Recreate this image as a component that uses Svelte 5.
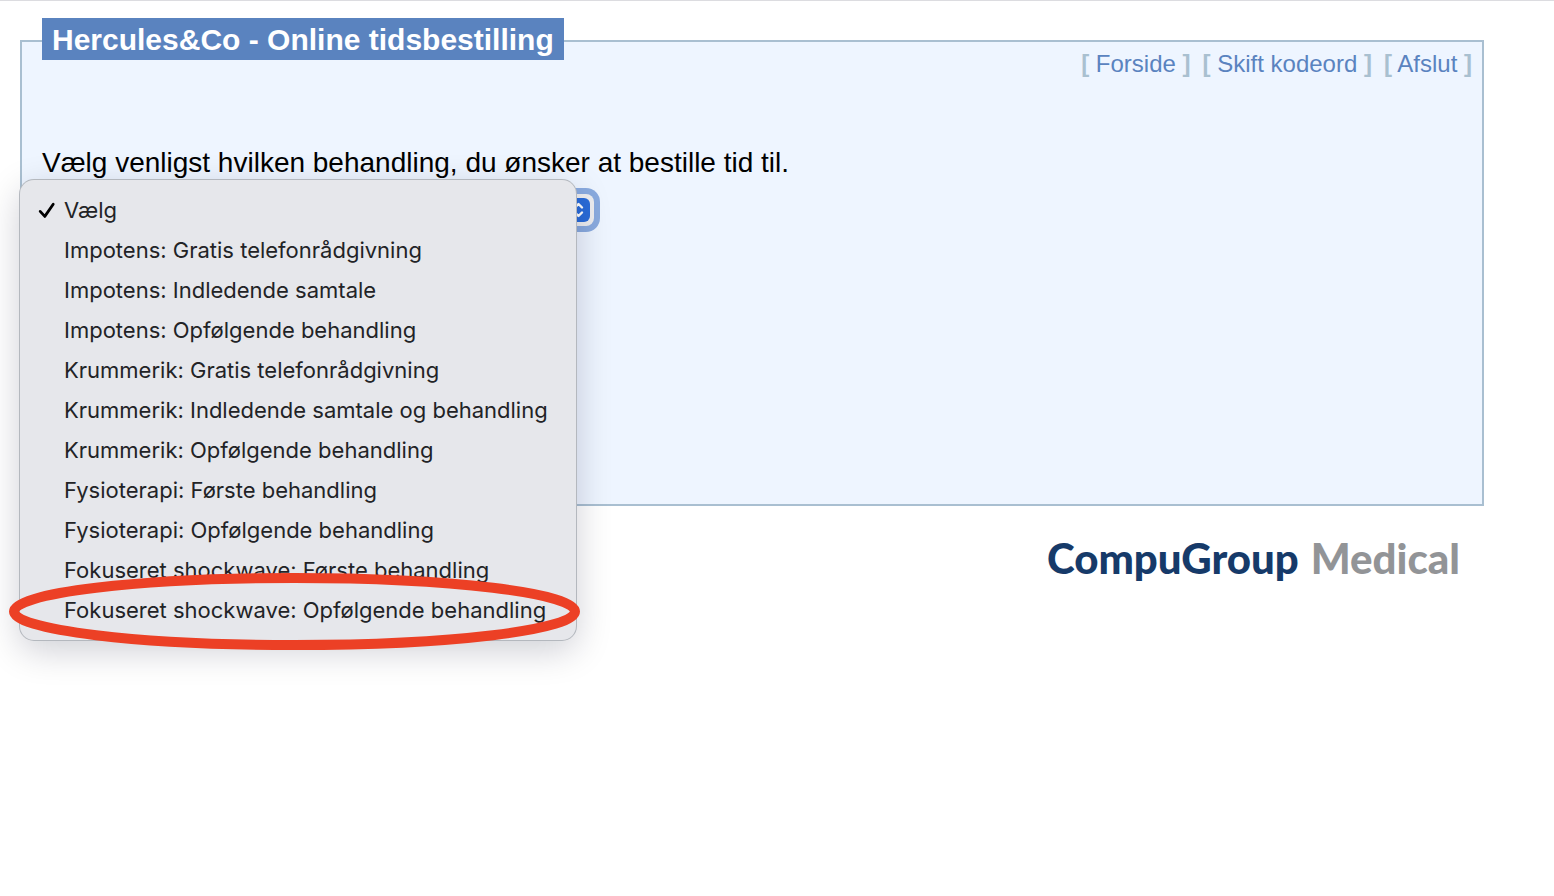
<script lang="ts">
  const links = ['Forside', 'Skift kodeord', 'Afslut'];

  const treatments = [
    'Vælg',
    'Impotens: Gratis telefonrådgivning',
    'Impotens: Indledende samtale',
    'Impotens: Opfølgende behandling',
    'Krummerik: Gratis telefonrådgivning',
    'Krummerik: Indledende samtale og behandling',
    'Krummerik: Opfølgende behandling',
    'Fysioterapi: Første behandling',
    'Fysioterapi: Opfølgende behandling',
    'Fokuseret shockwave: Første behandling',
    'Fokuseret shockwave: Opfølgende behandling',
  ];

  let selected = $state('Vælg');
</script>

<div class="page">
  <main class="panel">
    <header>
      <h1>Hercules&amp;Co - Online tidsbestilling</h1>
      <nav>
        {#each links as link}
          <span class="nav-item"><b>[</b> <a href="#top">{link}</a> <b>]</b></span>
        {/each}
      </nav>
    </header>

    <form>
      <label for="treatment">Vælg venligst hvilken behandling, du ønsker at bestille tid til.</label>
      <div class="picker">
        <select id="treatment" bind:value={selected}>
          {#each treatments as treatment}
            <option>{treatment}</option>
          {/each}
        </select>
        <span class="stepper">
          <svg width="24" height="24" viewBox="0 0 24 24" fill="none" aria-hidden="true">
            <path
              d="M9 9.5L12.5 6L16 9.5M9 14.5L12.5 18L16 14.5"
              stroke="#fff"
              stroke-width="2.4"
              stroke-linecap="round"
              stroke-linejoin="round"
            />
          </svg>
        </span>

        <!-- Open menu, laid over the select -->
        <div class="menu" role="listbox" aria-label="Behandling">
          {#each treatments as treatment}
            <button
              type="button"
              role="option"
              aria-selected={treatment === selected}
              onclick={() => (selected = treatment)}
            >
              <span class="check">
                {#if treatment === selected}
                  <svg width="18" height="18" viewBox="0 0 18 18" fill="none">
                    <path
                      d="M2.2 10.4L6.8 15.4L15.2 3.2"
                      stroke="#000"
                      stroke-width="2.8"
                      stroke-linecap="round"
                      stroke-linejoin="round"
                    />
                  </svg>
                {/if}
              </span>
              {treatment}
            </button>
          {/each}
          <svg class="marker" viewBox="0 0 571 77" preserveAspectRatio="none" aria-hidden="true">
            <ellipse cx="285.5" cy="38.5" rx="280.5" ry="33.5" fill="none" stroke="#ec4025" stroke-width="10" />
          </svg>
        </div>
      </div>
    </form>
  </main>

  <footer>
    <span class="compugroup">CompuGroup</span>
    <span class="medical">Medical</span>
  </footer>
</div>

<style>
  :global(body) {
    background: #fff;
  }

  .page {
    box-sizing: border-box;
    min-height: 100vh;
    border-top: 1px solid #dcdce0;
    padding: 39px 70px 0 20px;
    font-family: 'Liberation Sans', Arial, sans-serif;
  }

  .panel {
    box-sizing: border-box;
    min-height: 466px;
    padding: 0 10px 0 20px;
    border: 2px solid #a9bfd1;
    background: #eef5ff;
  }

  header {
    display: flex;
    justify-content: space-between;
    align-items: flex-start;
  }

  h1 {
    margin: -24px 0 0;
    padding: 2px 10px 0;
    background: #5a83bf;
    color: #fff;
    font-size: 30px;
    line-height: 40px;
    white-space: nowrap;
  }

  nav {
    display: flex;
    gap: 12px;
    padding-top: 8px;
    font-size: 24px;
    line-height: 28px;
  }

  nav b {
    color: #a9c0d0;
  }

  nav a {
    color: #5a83bf;
    text-decoration: none;
  }

  form {
    padding-top: 68px;
  }

  label {
    display: block;
    font-size: 28px;
    line-height: 34px;
  }

  .picker {
    position: relative;
    width: 552px;
    margin-top: 14px;
  }

  select {
    display: block;
    appearance: none;
    width: 100%;
    height: 32px;
    padding: 0 32px 0 16px;
    border: none;
    border-radius: 8px;
    background: #eeeef0;
    box-shadow: 0 0 0 6px #8aabdf;
    font-family: Inter, sans-serif;
    font-size: 22px;
    outline: none;
  }

  .stepper {
    position: absolute;
    top: 4px;
    right: 4px;
    width: 24px;
    height: 24px;
    border-radius: 6px;
    background: #2a6cd9;
    pointer-events: none;
  }

  .menu {
    position: absolute;
    top: -14px;
    left: -22px;
    box-sizing: border-box;
    width: 556px;
    padding: 10px 0;
    border-radius: 14px;
    background: #e6e7eb;
    box-shadow:
      0 0 0 1px #b4b8be,
      0 10px 36px rgba(0, 10, 40, 0.2);
  }

  .menu button {
    display: flex;
    align-items: center;
    width: 100%;
    height: 40px;
    padding: 0 0 0 18px;
    border: none;
    background: none;
    color: #222326;
    font-family: Inter, sans-serif;
    font-size: 22px;
    text-align: left;
    white-space: nowrap;
  }

  .check {
    display: flex;
    width: 26px;
  }

  .marker {
    position: absolute;
    bottom: -10px;
    left: -11px;
    width: 571px;
    height: 77px;
    pointer-events: none;
  }

  footer {
    display: flex;
    justify-content: flex-end;
    gap: 12px;
    padding: 28px 24px 0 0;
    font-family: Lato, sans-serif;
    font-size: 42px;
    font-weight: 900;
    line-height: 48px;
  }

  .compugroup {
    color: #163a69;
  }

  .medical {
    color: #929497;
  }
</style>
